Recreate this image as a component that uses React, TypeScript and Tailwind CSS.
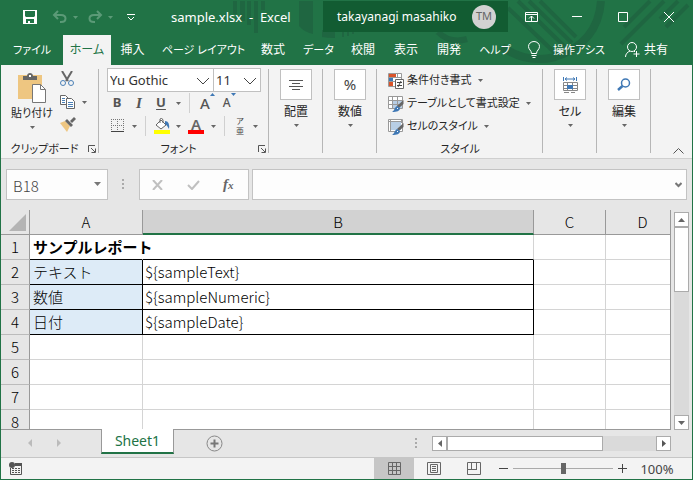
import type { ReactNode } from "react";

function Caret({ className = "" }: { className?: string }) {
  return (
    <svg className={"shrink-0 " + className} width="5" height="3" viewBox="0 0 5 3" aria-hidden="true">
      <path d="M0 0h5L2.5 3z" fill="currentColor" />
    </svg>
  );
}

function TitleArt() {
  return (
    <svg className="pointer-events-none absolute right-0 top-0" width="463" height="66" viewBox="230 0 463 66" fill="none" aria-hidden="true">
      <g fill="#1f6641">
        <path d="M234 1h4v13h-4zM241 1h5v20h-5zM248 1h4v24h-4zM255 1h4v32h-4zM262 1h4v9h-4z" />
        <path d="M300 1h14v33q-9-2-14-8z" />
        <path d="M323 30h13v8q-8 0-13-1zM343 31h2v6h-2zM348 31h2v5h-2zM353 31h2v3h-2z" />
      </g>
      <g stroke="#1f6641">
        <path d="M439 32q12 12 29 7" strokeWidth="6" />
        <path d="M509 8l48 46M519 1l47 46M530 1l43 42M541 1l36 36" strokeWidth="4" />
        <path d="M602 1q-3 42-46 56q-28 7-53-10" strokeWidth="8" />
        <path d="M651 1l-26 26M665 1l-43 43M679 1l-18 18M689 5l-22 22" strokeWidth="4" />
      </g>
    </svg>
  );
}

function TitleBar() {
  return (
    <header className="relative flex h-[35px] shrink-0 items-start pt-px">
      <div className="flex h-[31px] w-[170px] shrink-0 items-center pl-[22px] pt-px">
        <button aria-label="上書き保存">
          <svg width="14" height="14" viewBox="0 0 14 14" className="block">
            <path fill="#fff" fillRule="evenodd" d="M0 0h14v14H0zM2 1v5l1 1h8l1-1V1zM3 9v4h2v-2h2v2h4V9z" />
          </svg>
        </button>
        <button aria-label="元に戻す" className="ml-[15px] flex items-center gap-[6px] text-[#5b9a77]">
          <svg width="15" height="14" viewBox="0 0 15 14" fill="none" stroke="currentColor" strokeWidth="2">
            <path d="M6 1L2 5l4 4M2 5h7c6 0 6 7 0 7H8" />
          </svg>
          <Caret />
        </button>
        <button aria-label="やり直し" className="ml-[10px] flex items-center gap-[5px] text-[#5b9a77]">
          <svg width="15" height="14" viewBox="0 0 15 14" fill="none" stroke="currentColor" strokeWidth="2">
            <path d="M9 1l4 4-4 4M13 5H6c-6 0-6 7 0 7h1" />
          </svg>
          <Caret />
        </button>
        <button aria-label="クイック アクセス ツール バーのユーザー設定" className="ml-[14px]">
          <svg width="8" height="7" viewBox="0 0 8 7" fill="none" stroke="#fff">
            <path d="M0 .5h8M1 3l3 3 3-3" />
          </svg>
        </button>
      </div>
      <h1 className="flex-1 whitespace-pre text-[13px] leading-[32px]">sample.xlsx  -  Excel</h1>
      <div className="relative flex h-[31px] w-[185px] shrink-0 items-center justify-between bg-[#125c32] pl-[14px] pr-[12px]">
        <span className="whitespace-nowrap text-[12px]">takayanagi masahiko</span>
        <span className="flex size-[24px] items-center justify-center rounded-full bg-[#d2d2d2] text-[11px] text-[#666]">TM</span>
      </div>
      <div className="relative flex h-[31px] w-[184px] shrink-0 items-center">
        <button aria-label="リボンの表示オプション" className="flex w-[46px] justify-center">
          <svg width="13" height="10" viewBox="0 0 13 10" fill="none" stroke="#fff">
            <path d="M.5.5h12v9H.5zM0 2.5h13M6.5 9V4M4 6.500l2.500-2.500L9 6.500" />
          </svg>
        </button>
        <button aria-label="最小化" className="flex w-[46px] justify-center">
          <svg width="10" height="1"><path d="M0 0h10v1H0z" fill="#fff" /></svg>
        </button>
        <button aria-label="最大化" className="flex w-[46px] justify-center">
          <svg width="10" height="10"><path d="M.5.5h9v9h-9z" fill="none" stroke="#fff" /></svg>
        </button>
        <button aria-label="閉じる" className="flex w-[46px] justify-center">
          <svg width="10" height="10"><path d="M0 0l10 10M10 0L0 10" stroke="#fff" /></svg>
        </button>
      </div>
    </header>
  );
}

const TABS: [string, string][] = [
  ["ファイル", "w-[62px] text-[11px]"],
  ["ホーム", "w-[48px] text-[12px] bg-[#f3f3f3] text-[#217346]"],
  ["挿入", "w-[43px] text-[12px]"],
  ["ページ レイアウト", "w-[99px] text-[11px]"],
  ["数式", "w-[40px] text-[12px]"],
  ["データ", "w-[51px] text-[11px]"],
  ["校閲", "w-[38px] text-[12px]"],
  ["表示", "w-[48px] text-[12px]"],
  ["開発", "w-[38px] text-[12px]"],
  ["ヘルプ", "w-[54px] text-[11px]"],
];

function RibbonTabs() {
  return (
    <nav className="relative flex h-[30px] shrink-0 items-stretch whitespace-nowrap">
      {TABS.map(([name, look]) => (
        <button key={name} className={"shrink-0 " + look}>{name}</button>
      ))}
      <button className="ml-auto flex shrink-0 items-center gap-[13px] text-[11px]">
        <svg width="12" height="18" viewBox="0 0 12 18" fill="none" stroke="#fff">
          <path d="M3.500 12.500c0-3-3-4-3-7a5.500 5 0 0 1 11 0c0 3-3 4-3 7zM3.500 14.500h5M4.500 16.500h3" />
        </svg>
        操作アシス
      </button>
      <button className="ml-[20px] mr-[24px] flex shrink-0 items-center gap-[4px] text-[12px]">
        <svg width="15" height="16" viewBox="0 0 15 16" fill="none" stroke="#fff">
          <circle cx="7" cy="5" r="4.500" />
          <path d="M.5 15c0-3 2-5 4.500-6M11.500 9v6M8.500 12h6M9 9l1 1" />
        </svg>
        共有
      </button>
    </nav>
  );
}

function Group({ label, width, launcher, children }: { label?: string; width: string; launcher?: boolean; children: ReactNode }) {
  return (
    <section
      className={
        "relative flex shrink-0 flex-col pt-[4px] after:absolute after:right-0 after:top-[4px] after:h-[84px] after:w-px after:bg-[#b6b6b6] " + width
      }
    >
      <div className="flex-1">{children}</div>
      {label && (
        <div className="flex h-[18px] items-center">
          <span className="flex-1 text-center text-[11px] leading-[18px]">{label}</span>
          {launcher && (
            <button aria-label={label + "の詳細"} className="mr-[3px]">
              <svg width="8" height="8" viewBox="0 0 8 8" fill="none" stroke="#555">
                <path d="M.5 7V.5H7M3 3l4 4M7.500 3.500v4h-4" />
              </svg>
            </button>
          )}
        </div>
      )}
    </section>
  );
}

function TileButton({ label, children }: { label: string; children: ReactNode }) {
  return (
    <button className="flex w-full flex-col items-center">
      <span className="flex h-[31px] w-[32px] items-center justify-center border border-[#c0c0c0] bg-white">{children}</span>
      <span className="mt-[3px] text-[12px] leading-[18px]">{label}</span>
      <Caret className="mt-[3px] text-[#666]" />
    </button>
  );
}

function StyleButton({ label, children }: { label: string; children: ReactNode }) {
  return (
    <button className="flex h-[23px] items-center whitespace-nowrap pl-[11px] text-[11px]">
      <svg width="16" height="16" viewBox="0 0 16 16" className="mr-[3px]">{children}</svg>
      {label}
      <Caret className="ml-[6px] text-[#666]" />
    </button>
  );
}

function Brush() {
  return (
    <>
      <path d="M15.500 4v4L11 12l-2-2z" fill="#666" />
      <path d="M9 10l3 2c0 3-3 4-8 4 3-2 2-4 5-6z" fill="#3f78b5" />
      <path d="M9 12l1 1" stroke="#fff" />
    </>
  );
}

function FontCombo({ label, value, width }: { label: string; value: string; width: string }) {
  return (
    <label className={"relative block h-[24px] border border-[#c0c0c0] bg-white " + width}>
      <select aria-label={label} className="block h-[21px] w-full appearance-none bg-transparent pl-[2px] text-[13px] leading-[20px] text-[#333]">
        <option>{value}</option>
      </select>
      <svg className="pointer-events-none absolute right-[3px] top-[8px]" width="14" height="8" viewBox="0 0 14 8" fill="none" stroke="#444">
        <path d="M1 1l6 6 6-6" />
      </svg>
    </label>
  );
}

function Ribbon() {
  return (
    <div className="flex h-[94px] shrink-0 items-stretch border-b border-[#cfcfcf] bg-[#f3f3f3] text-[#262626]">
      <Group label="クリップボード" width="w-[98px]" launcher>
        <div className="flex">
          <button className="flex w-[62px] flex-col items-center pt-[4px]">
            <svg width="28" height="30" viewBox="0 0 28 30" className="block">
              <path d="M0 2h24v24H0z" fill="#eec681" />
              <path d="M5 7V3h4c0-4 6-4 6 0h4v4z" fill="#666" />
              <path d="M11 2h2v2h-2z" fill="#fff" />
              <path d="M14.500 11.500h8l5 5v13h-13z" fill="#fff" stroke="#777" />
              <path d="M22.500 11.500v5h5" fill="none" stroke="#777" />
            </svg>
            <span className="whitespace-nowrap text-[11px] leading-[20px]">貼り付け</span>
            <Caret className="mt-[3px] text-[#666]" />
          </button>
          <div className="-ml-[3px] flex flex-col items-start gap-[8px] pt-[2px]">
            <button aria-label="切り取り">
              <svg width="14" height="16" viewBox="0 0 14 16" fill="none" className="block">
                <path d="M2 0l6 10M12 0L6 10" stroke="#666" strokeWidth="2" />
                <circle cx="3" cy="12" r="2.500" stroke="#4a7fb5" />
                <circle cx="11" cy="12" r="2.500" stroke="#4a7fb5" />
              </svg>
            </button>
            <button aria-label="コピー" className="flex items-center gap-[7px] text-[#666]">
              <svg width="15" height="14" viewBox="0 0 15 14" fill="#fff" stroke="#666" className="block">
                <path d="M.5.5h5l3 3v6h-8z" />
                <path d="M6.500 3.500h5l3 3v7h-8z" />
                <path d="M2 3.500h3M2 5.500h3M2 7.500h3M8 7.500h5M8 9.500h5M8 11.500h5" stroke="#4a7fb5" />
              </svg>
              <Caret />
            </button>
            <button aria-label="書式のコピー/貼り付け">
              <svg width="16" height="15" viewBox="0 0 16 15" className="block">
                <path d="M0 6l5-2 5 5-3 6z" fill="#eec681" />
                <path d="M5 4l2-2 6 6-2 2zM10 4l4-4 2 2-4 4z" fill="#666" />
              </svg>
            </button>
          </div>
        </div>
      </Group>

      <Group label="フォント" width="w-[170px]" launcher>
        <div className="-mt-px flex pl-[8px]">
          <FontCombo label="フォント名" value="Yu Gothic" width="w-[107px]" />
          <FontCombo label="フォント サイズ" value="11" width="-ml-px w-[48px]" />
        </div>
        <div className="flex h-[22px] items-center pl-[12px] text-[13px] text-[#555]">
          <button className="w-[12px] font-bold">B</button>
          <button className="ml-[11px] w-[10px] font-['Liberation_Serif',serif] text-[15px] font-bold italic">I</button>
          <button className="ml-[11px] w-[12px] font-bold underline underline-offset-2">U</button>
          <Caret className="ml-[9px] text-[#666]" />
          <span className="ml-[8px] h-[20px] w-px bg-[#d0d0d0]" />
          <button aria-label="フォント サイズの拡大" className="ml-[10px] flex items-start">
            <span className="text-[15px] font-medium leading-[20px]">A</span>
            <svg width="5" height="3"><path d="M0 3h5L2.500 0z" fill="#3f78b5" /></svg>
          </button>
          <button aria-label="フォント サイズの縮小" className="ml-[8px] flex items-start">
            <span className="text-[12px] font-medium leading-[20px]">A</span>
            <svg width="5" height="3"><path d="M0 0h5L2.500 3z" fill="#3f78b5" /></svg>
          </button>
        </div>
        <div className="flex h-[24px] items-center pl-[12px] text-[#666]">
          <button aria-label="罫線" className="flex items-center gap-[8px]">
            <svg width="13" height="14" viewBox="0 0 13 14" fill="none" stroke="#777">
              <path d="M.5 0v12M6.500 0v12M12.500 0v12M0 .5h13M0 6.500h13" strokeDasharray="1 1" />
              <path d="M0 12.500h13" stroke="#444" />
            </svg>
            <Caret />
          </button>
          <span className="ml-[8px] h-[20px] w-px bg-[#d0d0d0]" />
          <button aria-label="塗りつぶしの色" className="ml-[8px] flex items-center gap-[6px]">
            <svg width="16" height="16" viewBox="0 0 16 16">
              <path d="M2 7l5-5 5 5-5 4zM6 5V1q2-2 3 1v3" fill="#fff" stroke="#666" />
              <path d="M11 3q5 0 4 8q-2-4-4-5z" fill="#3f78b5" />
              <path d="M0 12h16v4H0z" fill="#ff0" />
            </svg>
            <Caret />
          </button>
          <button aria-label="フォントの色" className="ml-[7px] flex items-center gap-[7px]">
            <span className="flex h-[16px] w-[16px] flex-col items-center border-b-4 border-[#f00] text-[15px] font-semibold leading-[12px]">A</span>
            <Caret />
          </button>
          <span className="ml-[8px] h-[20px] w-px bg-[#d0d0d0]" />
          <button aria-label="ふりがなの表示" className="ml-[10px] flex items-center gap-[8px]">
            <span className="flex w-[10px] flex-col items-center font-['Noto_Sans_CJK_JP',sans-serif] text-[8px] leading-[10px] text-[#444]">
              <span>ア</span>
              <span>亜</span>
            </span>
            <Caret />
          </button>
        </div>
      </Group>

      <Group width="w-[54px]">
        <TileButton label="配置">
          <svg width="14" height="12"><path d="M0 1.500h14M3 4.500h8M0 7.500h14M3 10.500h8" stroke="#555" /></svg>
        </TileButton>
      </Group>
      <Group width="w-[54px]">
        <TileButton label="数値">
          <span className="text-[15px] text-[#444]">%</span>
        </TileButton>
      </Group>

      <Group label="スタイル" width="w-[166px]">
        <div className="flex flex-col items-start">
          <StyleButton label="条件付き書式">
            <path d="M.5.5h13v13H.5z" fill="#fff" stroke="#999" />
            <path d="M1 1h7v3H1zM1 9h4v4H1z" fill="#d9542b" />
            <path d="M1 5h4v3H1z" fill="#3f78b5" />
            <path d="M0 4.500h14M0 8.500h14M9.500 0v5" stroke="#999" />
            <path d="M7.500 6.500h8v9h-8z" fill="#fff" stroke="#666" />
            <path d="M9 9.500h5M9 12.500h5M13 8l-3 6" stroke="#444" />
          </StyleButton>
          <StyleButton label="テーブルとして書式設定">
            <path d="M.5.5h14v12H.5z" fill="#fff" stroke="#999" />
            <path d="M5 4h9v8H5z" fill="#b8cee5" />
            <path d="M0 4.500h15M0 8.500h15M4.500 0v13M9.500 0v13" stroke="#999" />
            <Brush />
          </StyleButton>
          <StyleButton label="セルのスタイル">
            <path d="M.5.5h14v12H.5z" fill="#fff" stroke="#999" />
            <path d="M3 3h10v8H3z" fill="#b8cee5" />
            <path d="M0 2.500h15M2.500 0v13M13.500 0v4" stroke="#999" />
            <Brush />
          </StyleButton>
        </div>
      </Group>

      <Group width="w-[54px]">
        <TileButton label="セル">
          <svg width="15" height="16" viewBox="0 0 15 16" fill="none">
            <path d="M.5 0v4M13.500 0v4M2 2h10M4 .5L2 2l2 1.500M10 .5L12 2l-2 1.500" stroke="#3f78b5" />
            <path d="M.5 5.500h14v8H.5zM4.500 5v9M9.500 5v9M0 8.500h15M0 11.500h15M1 15.500h5M8 15.500h4" stroke="#888" />
            <path d="M4 8h6v4H4z" fill="#3f78b5" />
          </svg>
        </TileButton>
      </Group>
      <Group width="w-[54px]">
        <TileButton label="編集">
          <svg width="14" height="14" fill="none" stroke="#3f78b5">
            <circle cx="8.500" cy="5" r="4" strokeWidth="1.500" />
            <path d="M5.500 8L1 12" strokeWidth="2.500" />
          </svg>
        </TileButton>
      </Group>
      <button aria-label="リボンを折りたたむ" className="mb-[4px] ml-auto mr-[8px] self-end">
        <svg width="11" height="6" className="block"><path d="M.5 5.500l5-5 5 5" fill="none" stroke="#555" /></svg>
      </button>
    </div>
  );
}

function FormulaBar() {
  return (
    <div className="flex h-[51px] shrink-0 items-start pl-[5px] pr-[5px] pt-[10px] text-[#444]">
      <div className="relative h-[31px] w-[102px] shrink-0 border border-[#c3c3c3] bg-[#fdfdfd]">
        <input aria-label="名前ボックス" defaultValue="B18" className="h-full w-full bg-transparent pl-[6px] pt-[2px] font-['Noto_Sans_CJK_JP',sans-serif] text-[15px] font-light" />
        <svg className="pointer-events-none absolute right-[6px] top-[12px]" width="7" height="4"><path d="M0 0h7L3.500 4z" fill="#777" /></svg>
      </div>
      <svg className="ml-[14px] mt-[10px] shrink-0" width="2" height="11"><path d="M0 0h2v2H0zM0 4h2v2H0zM0 8h2v2H0z" fill="#aaa" /></svg>
      <div className="ml-[15px] flex h-[31px] w-[110px] shrink-0 items-center border border-[#c3c3c3] bg-[#fdfdfd]">
        <button aria-label="キャンセル" className="ml-[12px]">
          <svg width="11" height="10" viewBox="0 0 11 10"><path d="M1 0l9 10M10 0L1 10" stroke="#c0c0c0" strokeWidth="2" /></svg>
        </button>
        <button aria-label="入力" className="ml-[24px]">
          <svg width="13" height="10" viewBox="0 0 13 10"><path d="M1 5l4 4 7-8" fill="none" stroke="#c0c0c0" strokeWidth="2" /></svg>
        </button>
        <button aria-label="関数の挿入" className="ml-[23px] font-['Liberation_Serif',serif] text-[15px] font-bold italic leading-[20px] text-[#666]">
          f<span className="text-[11px]">x</span>
        </button>
      </div>
      <div className="relative ml-[3px] h-[31px] min-w-0 flex-1 border border-[#c3c3c3] bg-[#fdfdfd]">
        <input aria-label="数式バー" className="h-full w-full bg-transparent px-[6px] text-[15px]" />
        <svg className="pointer-events-none absolute right-[4px] top-[12px]" width="7" height="6"><path d="M.5 1l3 3 3-3" fill="none" stroke="#777" strokeWidth="2" /></svg>
      </div>
    </div>
  );
}

const ROWS: [string, string][] = [
  ["サンプルレポート", ""],
  ["テキスト", "${sampleText}"],
  ["数値", "${sampleNumeric}"],
  ["日付", "${sampleDate}"],
  ["", ""],
  ["", ""],
  ["", ""],
  ["", ""],
];

function Sheet() {
  return (
    <div className="flex min-h-0 flex-1">
      <div className="min-w-0 flex-1 overflow-hidden border-b border-r border-[#999]">
        <table className="w-[713px] table-fixed border-separate border-spacing-0 font-['Noto_Sans_CJK_JP',sans-serif] text-[15px] font-light leading-[20px] text-black [font-feature-settings:normal]">
          <colgroup>
            <col className="w-[29px]" />
            <col className="w-[113px]" />
            <col className="w-[391px]" />
            <col className="w-[72px]" />
            <col className="w-[108px]" />
          </colgroup>
          <thead>
            <tr className="h-[25px]">
              <th className="border-b border-r border-[#999] p-0">
                <svg width="17" height="17" className="ml-auto mr-[3px]"><path d="M17 0v17H0z" fill="#b4b4b4" /></svg>
              </th>
              <th className="border-b border-r border-[#999] p-0 font-light">A</th>
              <th className="border-b-2 border-r border-b-[#217346] border-r-[#999] bg-[#d2d2d2] p-0 font-light">B</th>
              <th className="border-b border-r border-[#999] p-0 font-light">C</th>
              <th className="border-b border-[#999] p-0 pr-[35px] font-light">D</th>
            </tr>
          </thead>
          <tbody className="bg-white">
            {ROWS.map(([a, b], i) => {
              const boxed = i > 0 && i < 4;
              const line = i < 4 ? "border-b-black" : "border-b-[#d4d4d4]";
              return (
                <tr key={i} className="h-[25px]">
                  <th scope="row" className="border-b border-r border-b-[#bbb] border-r-[#999] bg-[#e6e6e6] p-0 font-light">{i + 1}</th>
                  <td
                    className={
                      "whitespace-nowrap border-b border-r p-0 pl-[3px] " + line +
                      (boxed ? " border-r-black bg-[#ddebf7]" : i === 0 ? " border-r-white font-bold" : " border-r-[#d4d4d4]")
                    }
                  >
                    {a}
                  </td>
                  <td className={"border-b border-r p-0 pl-[2px] " + line + (boxed ? " border-r-black" : " border-r-[#d4d4d4]")}>{b}</td>
                  <td className="border-b border-r border-[#d4d4d4] p-0" />
                  <td className="border-b border-[#d4d4d4] p-0" />
                </tr>
              );
            })}
          </tbody>
        </table>
      </div>
      <div className="ml-[3px] mr-[3px] mt-[2px] flex w-[15px] shrink-0 flex-col bg-[#dadada]">
        <button aria-label="上へスクロール" className="flex h-[15px] items-center justify-center border border-[#ababab] bg-white">
          <svg width="7" height="4"><path d="M0 4h7L3.500 0z" fill="#666" /></svg>
        </button>
        <div className="h-[65px] border border-[#ababab] bg-white" />
        <button aria-label="下へスクロール" className="mt-auto flex h-[15px] items-center justify-center border border-[#ababab] bg-white">
          <svg width="7" height="4"><path d="M0 0h7L3.500 4z" fill="#666" /></svg>
        </button>
      </div>
    </div>
  );
}

function SheetTabs() {
  return (
    <div className="flex h-[27px] shrink-0 items-start text-[#bbb]">
      <button aria-label="前のシート" className="ml-[27px] mt-[9px]">
        <svg width="4" height="8" className="block"><path d="M4 0v8L0 4z" fill="currentColor" /></svg>
      </button>
      <button aria-label="次のシート" className="ml-[25px] mt-[9px]">
        <svg width="4" height="8" className="block"><path d="M0 0v8l4-4z" fill="currentColor" /></svg>
      </button>
      <button className="relative -mt-px ml-[40px] h-[25px] w-[73px] border-x border-b-2 border-x-[#999] border-b-[#217346] bg-white pt-px text-[14px] leading-[22px] text-[#217346]">Sheet1</button>
      <button aria-label="新しいシート" className="ml-[32px] mt-[5px]">
        <svg width="17" height="17" viewBox="0 0 17 17" fill="none" className="block">
          <circle cx="8.500" cy="8.500" r="7.500" stroke="#888" />
          <path d="M8.500 4.500v8M4.500 8.500h8" stroke="#777" strokeWidth="2" />
        </svg>
      </button>
      <svg className="ml-auto mt-[8px]" width="2" height="11"><path d="M0 0h2v2H0zM0 4h2v2H0zM0 8h2v2H0z" fill="#aaa" /></svg>
      <div className="ml-[15px] mr-[21px] mt-[6px] flex h-[15px] w-[239px] bg-[#dadada]">
        <button aria-label="左へスクロール" className="flex w-[15px] items-center justify-center border border-[#ababab] bg-white">
          <svg width="4" height="7"><path d="M4 0v7L0 3.500z" fill="#666" /></svg>
        </button>
        <div className="w-[156px] border border-[#ababab] bg-white" />
        <button aria-label="右へスクロール" className="ml-auto flex w-[15px] items-center justify-center border border-[#ababab] bg-white">
          <svg width="4" height="7"><path d="M0 0v7l4-3.500z" fill="#555" /></svg>
        </button>
      </div>
    </div>
  );
}

function StatusBar() {
  return (
    <footer className="flex h-[22px] shrink-0 items-center border-t border-[#c6c6c6] bg-[#f3f3f3] text-[#444]">
      <button aria-label="マクロの記録" className="ml-[8px]">
        <svg width="13" height="13" viewBox="0 0 13 13" className="block">
          <circle cx="3" cy="3" r="3" fill="#555" />
          <path d="M6 1h7v3H6z" fill="#555" />
          <path d="M1.500 6v6.500h11V4" fill="none" stroke="#555" />
          <path d="M3 6.500h8M3 8.500h8M3 10.500h8" stroke="#555" strokeDasharray="2 1" />
        </svg>
      </button>
      <button aria-label="標準" className="ml-auto flex h-full w-[40px] items-center justify-center bg-[#c6c6c6]">
        <svg width="13" height="13"><path d="M.5.5h12v12H.5zM4.500 0v13M8.500 0v13M0 4.500h13M0 8.500h13" fill="none" stroke="#666" /></svg>
      </button>
      <button aria-label="ページ レイアウト" className="flex w-[40px] justify-center">
        <svg width="14" height="13"><path d="M.5.5h13v12H.5zM3.500 2.500h7v8h-7zM5 4.500h4M5 6.500h4M5 8.500h4" fill="none" stroke="#666" /></svg>
      </button>
      <button aria-label="改ページ プレビュー" className="flex w-[40px] justify-center">
        <svg width="14" height="13"><path d="M.5.5h13v12H.5zM4.500 0v7M9.500 0v7M0 7.500h10" fill="none" stroke="#666" /></svg>
      </button>
      <button aria-label="縮小" className="ml-[5px]">
        <svg width="9" height="9" className="block"><path d="M0 4.500h9" stroke="#444" /></svg>
      </button>
      <input
        type="range"
        aria-label="ズーム"
        defaultValue={50}
        className="mx-[5px] h-[12px] w-[100px] appearance-none bg-[linear-gradient(#aaa,#aaa)] bg-[length:100%_1px] bg-center bg-no-repeat [&::-webkit-slider-thumb]:h-[11px] [&::-webkit-slider-thumb]:w-[5px] [&::-webkit-slider-thumb]:appearance-none [&::-webkit-slider-thumb]:bg-[#666]"
      />
      <button aria-label="拡大">
        <svg width="9" height="9" className="block"><path d="M0 4.500h9M4.500 0v9" stroke="#444" /></svg>
      </button>
      <button className="ml-[13px] mr-[18px] w-[34px] whitespace-nowrap text-[13px] leading-[20px]">100%</button>
    </footer>
  );
}

export default function App() {
  return (
    <div className="flex h-screen flex-col overflow-hidden border-x border-b border-[#217346] bg-[#e6e6e6] font-['Noto_Sans','Noto_Sans_CJK_JP',sans-serif] [font-feature-settings:'palt']">
      <div className="relative shrink-0 bg-[#217346] text-white">
        <TitleArt />
        <TitleBar />
        <RibbonTabs />
      </div>
      <Ribbon />
      <FormulaBar />
      <Sheet />
      <SheetTabs />
      <StatusBar />
    </div>
  );
}
